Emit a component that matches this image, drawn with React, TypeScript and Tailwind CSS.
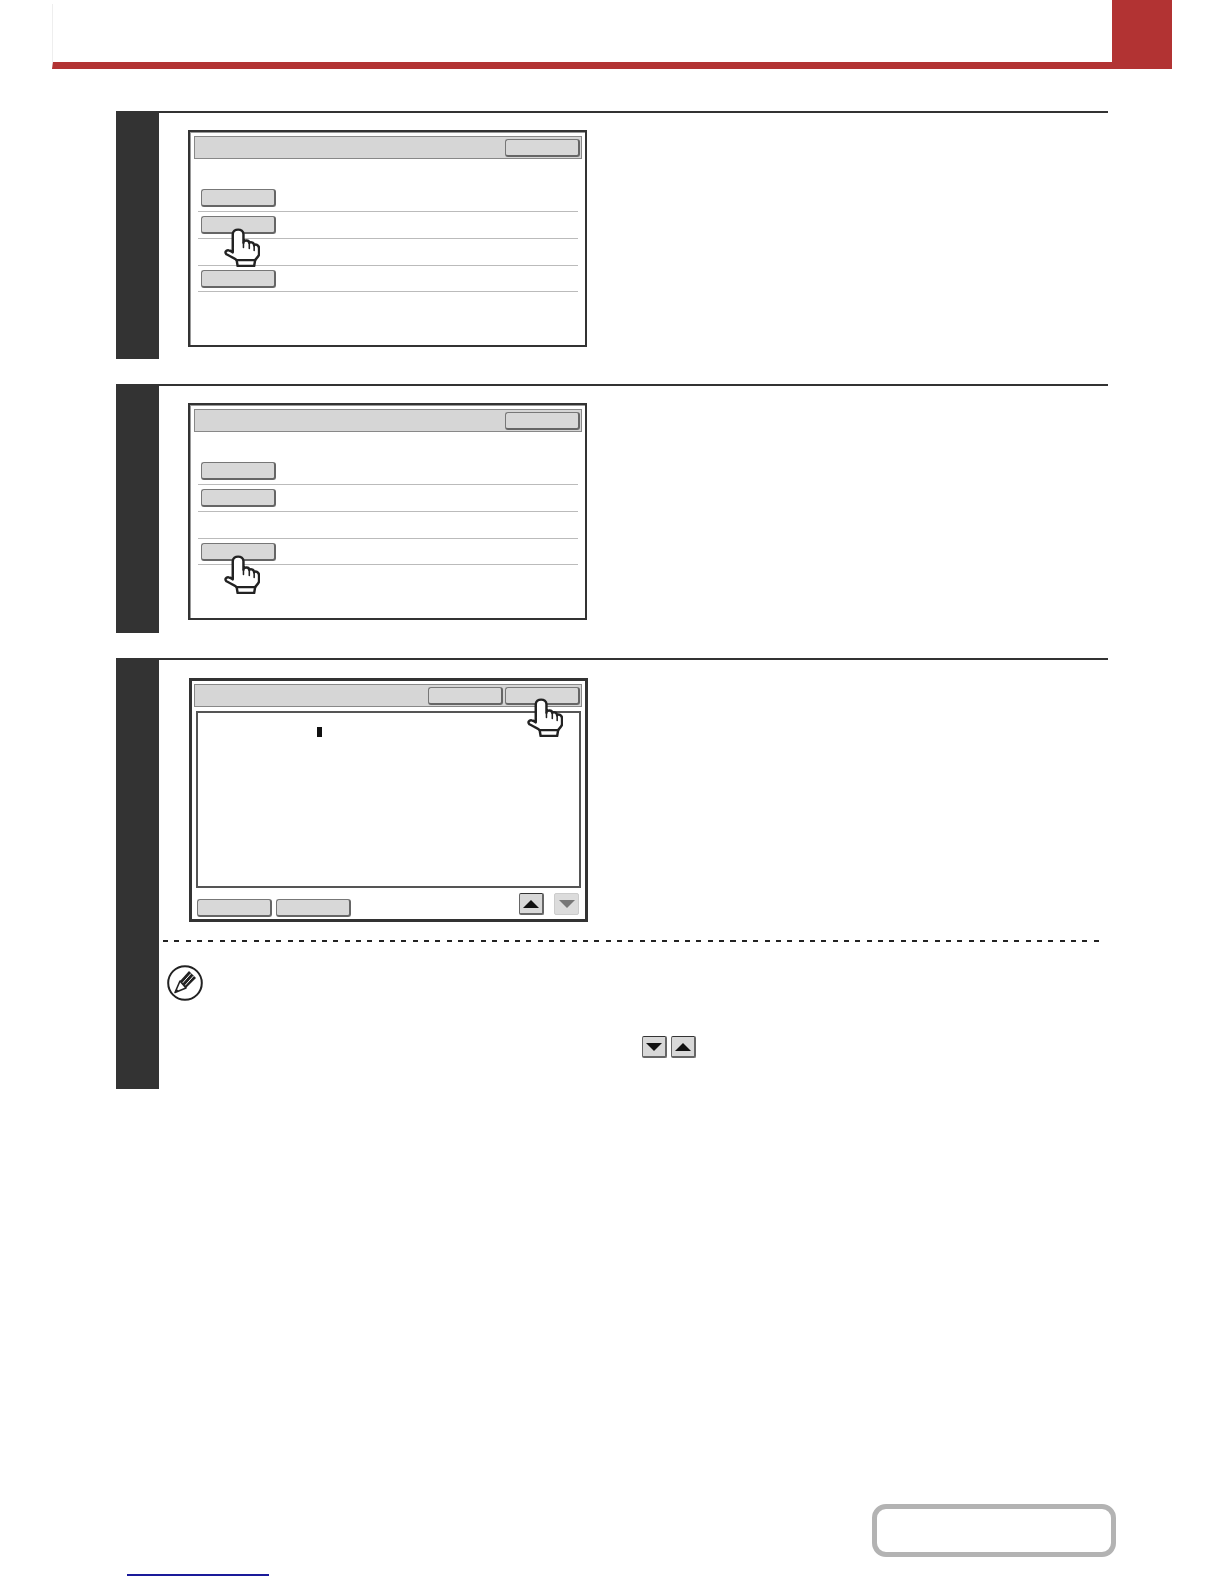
function Hand({ className }: { className: string }) {
  return (
    <svg className={`absolute h-[39px] w-[36px] ${className}`} viewBox="-1 -1 37 40" fill="none" stroke="#222" strokeWidth="2.5" strokeLinejoin="round" strokeLinecap="round">
      <path fill="#fff" d="M8 23V5.5C8-1 19-1 19 5.5V14C19 11 25 11 25 14.5C25 13 30 13 30 17C31 15 35 16 35 20V26C35 28 32 30 31 32H12C10 30 5 28 1.5 26C-.5 24 1 21.5 4 22C6 22 7 23 8 24Z" />
      <path fill="#fff" d="M12 32H31L30 38H13Z" />
      <path d="M19 14V19M25 15V20M30 17V22" strokeWidth="1.6" />
    </svg>
  );
}

function PanelButton() {
  return <div className="h-[18px] w-[75px] shrink-0 rounded-[3px] border border-[#777] border-r-2 border-b-2 border-r-[#666] border-b-[#666] bg-[#d8d8d8]" />;
}

function TitleBar({ buttons = 1 }: { buttons?: number }) {
  return (
    <div className="flex h-[23px] w-[388px] items-center justify-end gap-[2px] border border-[#888] bg-[#d6d6d6] pr-[1px]">
      {buttons > 1 && <PanelButton />}
      <PanelButton />
    </div>
  );
}

function Row({ button = true, height = "h-[27px]" }: { button?: boolean; height?: string }) {
  return (
    <div className={`${height} border-b border-[#bbb] pt-[4px] pl-[3px]`}>
      {button && <PanelButton />}
    </div>
  );
}

function MenuPanel({ hand }: { hand: string }) {
  return (
    <div className="relative mt-[17px] ml-[29px] h-[217px] w-[399px] border-2 border-[#333] pt-[4px] pl-[4px] shadow-[inset_1px_1px_0_#999]">
      <TitleBar />
      <div className="mt-[26px] ml-[4px] w-[380px]">
        <Row />
        <Row />
        <Row button={false} />
        <Row height="h-[26px]" />
      </div>
      <Hand className={hand} />
    </div>
  );
}

function ArrowButton({ up, disabled }: { up?: boolean; disabled?: boolean }) {
  return (
    <div className={`flex h-[22px] w-[25px] items-center justify-center rounded-[2px] border ${disabled ? "border-[#ccc] bg-[#dcdcdc]" : "border-[#666] border-b-2 border-r-2 border-t-[#333] bg-[#d8d8d8]"}`}>
      <svg className="h-[8px] w-[16px]" viewBox="0 0 16 8">
        <path d={up ? "M0 8L8 0L16 8Z" : "M0 0H16L8 8Z"} fill={disabled ? "#777" : "#111"} />
      </svg>
    </div>
  );
}

function NoteIcon() {
  return (
    <svg className="h-[36px] w-[36px]" viewBox="0 0 36 36">
      <circle cx="18" cy="18" r="16.8" fill="#fff" stroke="#222" strokeWidth="2" />
      <path d="M13 16L22 6L29 13L19 23Z" fill="#222" />
      <path d="M15.5 18L24 8.5M18 20.5L26.5 11" stroke="#fff" strokeWidth="1" />
      <path d="M13 16L19 23L8 27.5Z" fill="#fff" stroke="#222" strokeWidth="1.6" strokeLinejoin="round" />
      <path d="M8 27.5L9.5 23.8L11.6 26Z" fill="#222" />
    </svg>
  );
}

function Step({ height, children }: { height: string; children: React.ReactNode }) {
  return (
    <div className={`flex w-[992px] border-t-2 border-[#333] ${height}`}>
      <div className="w-[43px] shrink-0 bg-[#333]" />
      <div className="min-w-0 flex-1">{children}</div>
    </div>
  );
}

export default function App() {
  return (
    <div className="h-[1584px] w-[1224px] overflow-hidden bg-white">
      {/* Page header */}
      <div className="ml-[52px] flex h-[69px] w-[1120px]">
        <div className="mt-[4px] flex-1 border-b-[7px] border-l border-[#b23333] border-l-[#eee]" />
        <div className="w-[60px] bg-[#b23333]" />
      </div>

      <div className="mt-[42px] ml-[116px] flex flex-col gap-[25px]">
        <Step height="h-[248px]">
          <MenuPanel hand="left-[34px] top-[96px]" />
        </Step>

        <Step height="h-[249px]">
          <MenuPanel hand="left-[34px] top-[150px]" />
        </Step>

        <Step height="h-[431px]">
          {/* Address list panel */}
          <div className="relative mt-[18px] ml-[30px] h-[244px] w-[399px] border-[3px] border-[#333] pt-[3px] pl-[2px]">
            <TitleBar buttons={2} />
            <div className="relative mt-[4px] ml-[2px] h-[177px] w-[385px] border-2 border-[#555]">
              <div className="absolute top-[14px] left-[119px] h-[10px] w-[5px] bg-[#111]" />
            </div>
            <div className="mt-[5px] flex items-start pr-[6px] pl-[3px]">
              <div className="mt-[6px] flex gap-[4px]">
                <PanelButton />
                <PanelButton />
              </div>
              <div className="ml-auto flex gap-[10px]">
                <ArrowButton up />
                <ArrowButton disabled />
              </div>
            </div>
            <Hand className="left-[335px] top-[17px]" />
          </div>

          {/* Dashed divider */}
          <div className="mt-[18px] ml-[4px] h-[2px] w-[940px] bg-[repeating-linear-gradient(90deg,#222_0,#222_5px,transparent_5px,transparent_11.35px)]" />

          {/* Note */}
          <div className="mt-[23px] ml-[8px]">
            <NoteIcon />
          </div>
          <div className="mt-[35px] ml-[483px] flex gap-[4px]">
            <ArrowButton />
            <ArrowButton up />
          </div>
        </Step>
      </div>

      {/* Contents button */}
      <div className="mt-[415px] ml-[872px] h-[53px] w-[244px] rounded-[14px] border-[5px] border-[#b3b3b3]" />
      <div className="mt-[17px] ml-[127px] h-[2px] w-[142px] bg-[#1a1a9a]" />
    </div>
  );
}
